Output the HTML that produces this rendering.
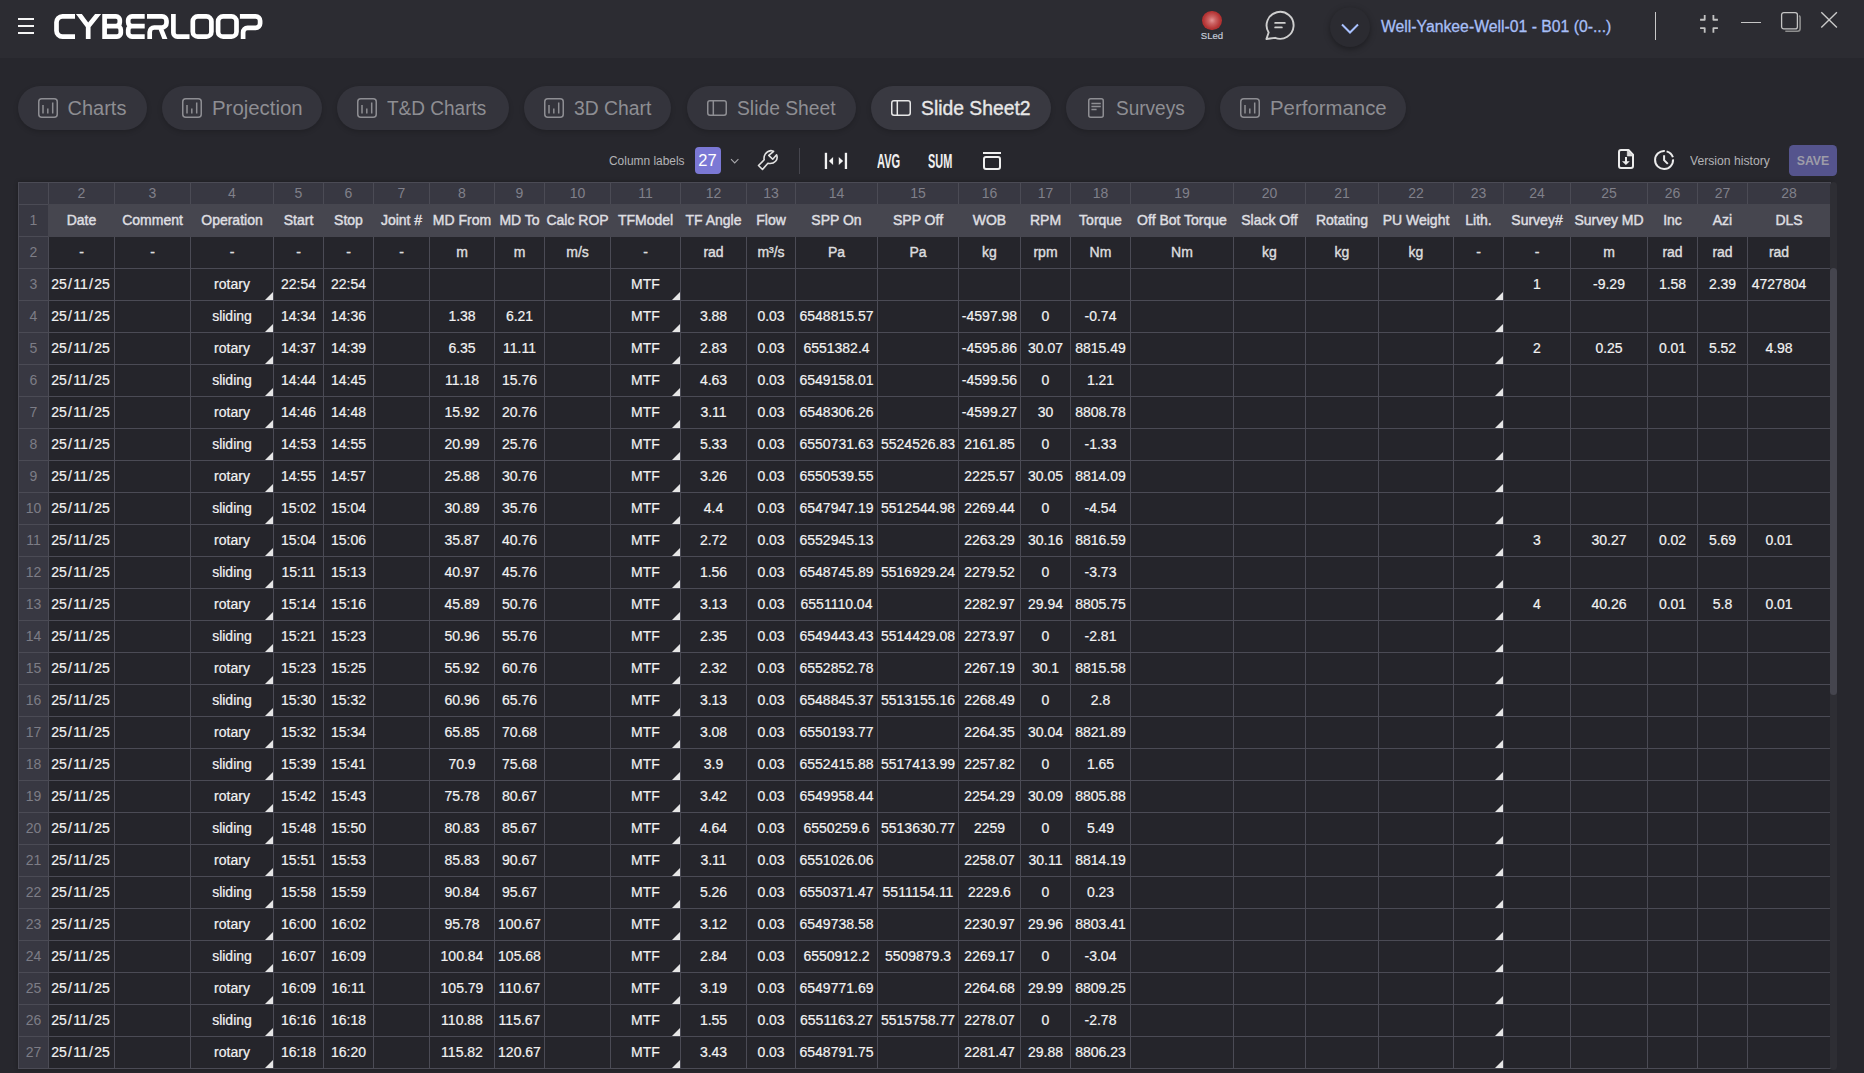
<!DOCTYPE html>
<html><head><meta charset="utf-8">
<style>
:root{--page:#27272d;--bar:#2c2c32;--cell:#25252b;--colnum:#383842;--hdr:#46464f;--grid:#4b4b55;}
*{margin:0;padding:0;box-sizing:border-box}
html,body{width:1864px;height:1073px;overflow:hidden;background:var(--page);font-family:"Liberation Sans",sans-serif;}
.abs{position:absolute}
#top{position:absolute;left:0;top:0;width:1864px;height:58px;background:var(--bar)}
.tab{position:absolute;top:86px;height:44px;border-radius:22px;background:#34343c;box-shadow:0 2px 5px rgba(0,0,0,.18);color:#8e8e93;font-size:20px;line-height:44px;white-space:nowrap}
.tab.act{background:#393941;color:#e8e8e8}
.tab.act span{-webkit-text-stroke:0.35px #e8e8e8}
.tab svg{position:absolute;left:20px;top:12px}
.tab span{position:absolute;left:49.5px;top:0;transform-origin:0 50%}
.lbl{font-size:12.3px;line-height:20px;color:#b3b3b6;white-space:nowrap}
.cond{font-size:19.5px;font-weight:bold;line-height:20px;color:#f0f0f0;transform:scaleX(0.6);transform-origin:0 0;white-space:nowrap}
.tbl{position:absolute;left:18px;top:182px;width:1813px;height:887px;box-shadow:0 0 4px rgba(0,0,0,.3)}
.tbl em{font-style:normal;margin:0 1.3px}
.sb{position:absolute;left:1830px;width:7px}
.tbl i.v{position:absolute;top:0;width:1px;height:887px;background:var(--grid)}
.tbl i.h{position:absolute;left:0;height:1px;width:1813px;background:var(--grid)}
.tbl div.cn{position:absolute;top:0px;height:21px;line-height:22px;text-align:center;color:#80808a;font-size:14px}
.tbl div.rn{position:absolute;left:1px;width:29px;text-align:center;color:#7d7d86;font-size:14px}
.tbl div.hd,.tbl div.un,.tbl div.dt{position:absolute;text-align:center;white-space:nowrap;font-size:14px}
.tbl div.hd{color:#dedee0;-webkit-text-stroke:0.45px #dedee0}
.tbl div.un{color:#dddddf;-webkit-text-stroke:0.4px #dddddf}
.tbl div.dt{color:#f2f2f2;-webkit-text-stroke:0.2px #f2f2f2}
.tbl b.tri{position:absolute;width:8px;height:8px;background:#e6e6e6;clip-path:polygon(100% 0,100% 100%,0 100%)}
</style></head>
<body>
<div id="top"></div>
<!-- hamburger -->
<div class="abs" style="left:18px;top:18px;width:16px;height:2px;background:#f4f4f4"></div>
<div class="abs" style="left:18px;top:25px;width:16px;height:2px;background:#f4f4f4"></div>
<div class="abs" style="left:18px;top:32px;width:16px;height:2px;background:#f4f4f4"></div>
<!-- logo -->
<svg class="abs" style="left:0;top:0" width="280" height="58" viewBox="0 0 280 58">
<defs><clipPath id="lc"><rect x="0" y="14" width="280" height="25"/></clipPath></defs>
<g clip-path="url(#lc)" fill="none" stroke="#ffffff" stroke-width="4.7" stroke-linejoin="round">
<path d="M75 16.35 H62.5 A6 6 0 0 0 56.5 22.5 V30.5 A6 6 0 0 0 62.5 36.65 H75"/>
<path d="M77.4 12 L88.2 26.3 L99.7 12 M88.2 25 V40"/>
<path d="M104.6 12 V40 M104.6 16.35 H116 A3.8 3.8 0 0 1 119.8 20.3 V22.3 A3.8 3.8 0 0 1 116 26.1 H104.6 H117 A3.8 3.8 0 0 1 120.8 29.9 V32.7 A3.8 3.8 0 0 1 117 36.65 H104.6"/>
<path d="M144.7 16.35 H132 A3.8 3.8 0 0 0 128.2 20.3 V22.3 A3.8 3.8 0 0 0 132 26.1 H144.7 M132 26.1 A3.8 3.8 0 0 0 128.2 29.9 V32.7 A3.8 3.8 0 0 0 132 36.65 H144.7"/>
<path d="M147 16.35 H162 A4.5 4.5 0 0 1 166.5 21 V23 A4.5 4.5 0 0 1 162 27.5 H154.2 A4.5 4.5 0 0 0 149.7 32 V40 M160.5 28 L165.3 40"/>
<path d="M173.4 12 V32.5 A4 4 0 0 0 177.4 36.65 H189.5"/>
<rect x="192.8" y="16.35" width="18.6" height="20.3" rx="5"/>
<rect x="218.1" y="16.35" width="18.4" height="20.3" rx="5"/>
<path d="M239.9 16.35 H255.6 A4.5 4.5 0 0 1 260.1 21 V23.4 A4.5 4.5 0 0 1 255.6 27.9 H247.6 A4.5 4.5 0 0 0 243.1 32.4 V40"/>
</g></svg>
<!-- right header -->
<div class="abs" style="left:1202px;top:10.6px;width:19.8px;height:19.6px;border-radius:50%;background:radial-gradient(circle at 50% 49%,#e39393 0%,#cc6464 25%,#b53535 60%,#a81c1c 100%)"></div>
<div class="abs" style="left:1199px;top:29.5px;width:26px;text-align:center;font-size:9.6px;line-height:12px;color:#c8cedc;-webkit-text-stroke:0.15px #c8cedc">SLed</div>
<svg class="abs" style="left:1260px;top:5px" width="40" height="40" viewBox="0 0 40 40" fill="none" stroke="#cfcfcf" stroke-width="1.9" stroke-linecap="round" stroke-linejoin="round">
<path d="M15.04 32.82 A13.5 13.5 0 1 0 8.65 27.45 L6.4 34 Z"/>
<path d="M15.2 17.9 H24.8 M15.2 22.4 H21.8"/>
</svg>
<div class="abs" style="left:1330px;top:7px;width:40px;height:40px;border-radius:50%;background:#2b2b31;box-shadow:0 2px 6px rgba(0,0,0,.35)"></div>
<svg class="abs" style="left:1340px;top:22px" width="20" height="14" viewBox="0 0 20 14" fill="none" stroke="#a9c2ff" stroke-width="2"><path d="M2 2.5 L10 10.5 L18 2.5"/></svg>
<div class="abs" id="well" style="left:1380.5px;top:18px;transform:scaleX(0.985);font-size:16px;line-height:18px;color:#a7bff7;white-space:nowrap;-webkit-text-stroke:0.3px #a7bff7;transform-origin:0 50%">Well-Yankee-Well-01 - B01 (0-...)</div>
<div class="abs" style="left:1654.5px;top:12px;width:1px;height:27.5px;background:#c8c8c8"></div>
<svg class="abs" style="left:1692px;top:8px" width="34" height="30" viewBox="0 0 34 30" fill="none" stroke="#c2c2c2" stroke-width="1.8" stroke-linejoin="round"><path d="M12.7 7 V11.74 H8.1 M21.4 7 V11.74 H25.9 M8.1 20.1 H12.7 V24.7 M25.9 20.1 H21.4 V24.7"/></svg>
<div class="abs" style="left:1741px;top:22px;width:20px;height:1.2px;background:#c6c6c6"></div>
<svg class="abs" style="left:1778px;top:9px" width="28" height="28" viewBox="0 0 28 28" fill="none" stroke="#c4c4c4" stroke-width="1.3">
<path d="M7.3 22.2 H19.4 Q22.1 22.2 22.1 19.5 V8.6 Q22.1 7.2 21.1 6.6" stroke="#8e8e8e" stroke-width="1.6"/>
<rect x="3.6" y="3.6" width="15.8" height="16.3" rx="2.2"/>
</svg>
<svg class="abs" style="left:1818px;top:9px" width="22" height="22" viewBox="0 0 22 22" fill="none" stroke="#c9c9c9" stroke-width="1.4"><path d="M3.3 3.3 L18.9 18.6 M18.9 3.3 L3.3 18.6"/></svg>

<div class="tab" style="left:18px;width:128.5px"><svg style="left:20px;top:12px" width="20" height="20" viewBox="0 0 20 20" fill="none" stroke="currentColor" stroke-width="1.5"><rect x="0.75" y="0.75" width="18.5" height="18.5" rx="3"/><path d="M5 7 V15.5 M9.8 10.4 V15.5 M14.7 4.4 V15.5"/></svg><span style="transform:scaleX(1.0)">Charts</span></div>
<div class="tab" style="left:162px;width:160px"><svg style="left:20px;top:12px" width="20" height="20" viewBox="0 0 20 20" fill="none" stroke="currentColor" stroke-width="1.5"><rect x="0.75" y="0.75" width="18.5" height="18.5" rx="3"/><path d="M5 7 V15.5 M9.8 10.4 V15.5 M14.7 4.4 V15.5"/></svg><span style="transform:scaleX(1.02)">Projection</span></div>
<div class="tab" style="left:337px;width:171.7px"><svg style="left:20px;top:12px" width="20" height="20" viewBox="0 0 20 20" fill="none" stroke="currentColor" stroke-width="1.5"><rect x="0.75" y="0.75" width="18.5" height="18.5" rx="3"/><path d="M5 7 V15.5 M9.8 10.4 V15.5 M14.7 4.4 V15.5"/></svg><span style="transform:scaleX(0.95)">T&amp;D Charts</span></div>
<div class="tab" style="left:524px;width:147.4px"><svg style="left:20px;top:12px" width="20" height="20" viewBox="0 0 20 20" fill="none" stroke="currentColor" stroke-width="1.5"><rect x="0.75" y="0.75" width="18.5" height="18.5" rx="3"/><path d="M5 7 V15.5 M9.8 10.4 V15.5 M14.7 4.4 V15.5"/></svg><span style="transform:scaleX(0.966)">3D Chart</span></div>
<div class="tab" style="left:687px;width:168.8px"><svg style="left:19.8px;top:14px" width="20" height="16" viewBox="0 0 20 16" fill="none" stroke="currentColor" stroke-width="1.5"><rect x="0.75" y="0.75" width="18.5" height="14.5" rx="2.2"/><path d="M6.3 1 V15"/></svg><span style="transform:scaleX(0.964)">Slide Sheet</span></div>
<div class="tab act" style="left:871px;width:179.6px"><svg style="left:19.8px;top:14px" width="20" height="16" viewBox="0 0 20 16" fill="none" stroke="currentColor" stroke-width="1.5"><rect x="0.75" y="0.75" width="18.5" height="14.5" rx="2.2"/><path d="M6.3 1 V15"/></svg><span style="transform:scaleX(0.966)">Slide Sheet2</span></div>
<div class="tab" style="left:1066px;width:139px"><svg style="left:21.8px;top:12px" width="16" height="20" viewBox="0 0 16 20" fill="none" stroke="currentColor" stroke-width="1.5"><rect x="0.75" y="0.75" width="14.5" height="18.5" rx="2"/><path d="M3.4 5.6 H12.8 M3.4 8.6 H12.8 M3.4 11.6 H8.6"/></svg><span style="transform:scaleX(0.951)">Surveys</span></div>
<div class="tab" style="left:1220px;width:186px"><svg style="left:20px;top:12px" width="20" height="20" viewBox="0 0 20 20" fill="none" stroke="currentColor" stroke-width="1.5"><rect x="0.75" y="0.75" width="18.5" height="18.5" rx="3"/><path d="M5 7 V15.5 M9.8 10.4 V15.5 M14.7 4.4 V15.5"/></svg><span style="transform:scaleX(1.019)">Performance</span></div>

<div class="abs lbl" style="left:608.5px;top:151px;transform:scaleX(0.97);transform-origin:0 0">Column labels</div>
<div class="abs" style="left:695px;top:147px;width:26px;height:27px;border-radius:4px;background:#7b78d5"></div>
<div class="abs" style="left:697px;top:150px;width:21px;text-align:center;font-size:16.5px;line-height:21px;color:#fff">27</div>
<svg class="abs" style="left:728px;top:156px" width="12" height="10" viewBox="0 0 12 10" fill="none" stroke="#a8a8ac" stroke-width="1.1"><path d="M3 3.2 L6.7 6.9 L10.4 3.2"/></svg>
<svg class="abs" style="left:750px;top:144px" width="40" height="32" viewBox="0 0 40 32" fill="none" stroke="#e2e2e2" stroke-width="1.6" stroke-linejoin="round"><path d="M8.5 21.5 L14.2 15.8 C13.4 12.5 15.5 7.2 20.9 6.6 L23.6 7.3 L18.8 11.4 L22.7 15.2 L26.6 10.8 C28.5 15.5 24.8 20.5 17.9 19.3 L12.5 25.5 Z"/></svg>
<div class="abs" style="left:799px;top:148px;width:1px;height:26px;background:#46464e"></div>
<svg class="abs" style="left:818px;top:146px" width="40" height="30" viewBox="0 0 40 30" fill="#f2f2f2"><rect x="6.8" y="6.8" width="2.3" height="16.2"/><rect x="26.8" y="6.8" width="2.3" height="16.2"/><path d="M10.9 15.1 L15.1 10.9 V19 Z M25.1 15.1 L20.8 10.9 V19 Z"/></svg>
<div class="abs cond" style="left:876.5px;top:151px;transform:scaleX(0.57)">AVG</div>
<div class="abs cond" style="left:927.5px;top:151px;transform:scaleX(0.56)">SUM</div>
<svg class="abs" style="left:980px;top:148px" width="24" height="26" viewBox="0 0 24 26" fill="none" stroke="#f0f0f0" stroke-width="2"><path d="M3 5 H21"/><rect x="4" y="9" width="16" height="12" rx="2"/></svg>
<svg class="abs" style="left:1612px;top:144px" width="28" height="30" viewBox="0 0 28 30" fill="none" stroke="#ececec" stroke-width="2" stroke-linejoin="round"><path d="M9 5.9 H16.5 L21 10.6 V22 Q21 24 19 24 H9 Q7 24 7 22 V7.9 Q7 5.9 9 5.9 Z"/><path d="M15.3 6 V12 H21 Z" fill="#dcdcdc" stroke-width="0.6"/><path d="M14 13 V19.5" stroke-width="2"/><path d="M10 17.3 H17.8 L13.9 21 Z" fill="#ececec" stroke="none"/></svg>
<svg class="abs" style="left:1650px;top:146px" width="28" height="28" viewBox="0 0 28 28" fill="none" stroke="#ececec" stroke-width="2"><path d="M14.8 5.1 A9 9 0 1 0 23.05 13.4"/><path d="M16.6 5.35 A9 9 0 0 1 22.9 11.3"/><path d="M14.1 9.3 V14.1 L17.8 17.9"/></svg>
<div class="abs lbl" style="left:1690px;top:151px;transform:scaleX(0.99);transform-origin:0 0">Version history</div>
<div class="abs" style="left:1789px;top:145px;width:48px;height:31px;border-radius:4.5px;background:#55548d"></div>
<div class="abs" style="left:1789px;top:146px;width:48px;height:31px;text-align:center;line-height:31px;font-size:12.3px;font-weight:bold;color:#9d9ca8">SAVE</div>

<div class="tbl">
<div style="position:absolute;left:0;top:0;width:1813px;height:887px;background:var(--cell)"></div>
<div style="position:absolute;left:0;top:0;width:1813px;height:22px;background:var(--colnum)"></div>
<div style="position:absolute;left:0;top:22px;width:30px;height:865px;background:var(--colnum)"></div>
<i class="v" style="left:0px"></i>
<i class="v" style="left:30px"></i>
<i class="v" style="left:96px"></i>
<i class="v" style="left:172px"></i>
<i class="v" style="left:255px"></i>
<i class="v" style="left:305px"></i>
<i class="v" style="left:355px"></i>
<i class="v" style="left:411px"></i>
<i class="v" style="left:476px"></i>
<i class="v" style="left:526px"></i>
<i class="v" style="left:592px"></i>
<i class="v" style="left:662px"></i>
<i class="v" style="left:728px"></i>
<i class="v" style="left:777px"></i>
<i class="v" style="left:859px"></i>
<i class="v" style="left:940px"></i>
<i class="v" style="left:1002px"></i>
<i class="v" style="left:1052px"></i>
<i class="v" style="left:1112px"></i>
<i class="v" style="left:1215px"></i>
<i class="v" style="left:1287px"></i>
<i class="v" style="left:1360px"></i>
<i class="v" style="left:1435px"></i>
<i class="v" style="left:1485px"></i>
<i class="v" style="left:1552px"></i>
<i class="v" style="left:1629px"></i>
<i class="v" style="left:1679px"></i>
<i class="v" style="left:1729px"></i>
<i class="v" style="left:1812px"></i>
<i class="h" style="top:0px"></i>
<i class="h" style="top:22px"></i>
<i class="h" style="top:54px"></i>
<i class="h" style="top:86px"></i>
<i class="h" style="top:118px"></i>
<i class="h" style="top:150px"></i>
<i class="h" style="top:182px"></i>
<i class="h" style="top:214px"></i>
<i class="h" style="top:246px"></i>
<i class="h" style="top:278px"></i>
<i class="h" style="top:310px"></i>
<i class="h" style="top:342px"></i>
<i class="h" style="top:374px"></i>
<i class="h" style="top:406px"></i>
<i class="h" style="top:438px"></i>
<i class="h" style="top:470px"></i>
<i class="h" style="top:502px"></i>
<i class="h" style="top:534px"></i>
<i class="h" style="top:566px"></i>
<i class="h" style="top:598px"></i>
<i class="h" style="top:630px"></i>
<i class="h" style="top:662px"></i>
<i class="h" style="top:694px"></i>
<i class="h" style="top:726px"></i>
<i class="h" style="top:758px"></i>
<i class="h" style="top:790px"></i>
<i class="h" style="top:822px"></i>
<i class="h" style="top:854px"></i>
<i class="h" style="top:886px"></i>
<div style="position:absolute;left:30px;top:22px;width:1783px;height:33px;background:var(--hdr)"></div>
<div class="cn" style="left:31px;width:65px">2</div>
<div class="cn" style="left:97px;width:75px">3</div>
<div class="cn" style="left:173px;width:82px">4</div>
<div class="cn" style="left:256px;width:49px">5</div>
<div class="cn" style="left:306px;width:49px">6</div>
<div class="cn" style="left:356px;width:55px">7</div>
<div class="cn" style="left:412px;width:64px">8</div>
<div class="cn" style="left:477px;width:49px">9</div>
<div class="cn" style="left:527px;width:65px">10</div>
<div class="cn" style="left:593px;width:69px">11</div>
<div class="cn" style="left:663px;width:65px">12</div>
<div class="cn" style="left:729px;width:48px">13</div>
<div class="cn" style="left:778px;width:81px">14</div>
<div class="cn" style="left:860px;width:80px">15</div>
<div class="cn" style="left:941px;width:61px">16</div>
<div class="cn" style="left:1003px;width:49px">17</div>
<div class="cn" style="left:1053px;width:59px">18</div>
<div class="cn" style="left:1113px;width:102px">19</div>
<div class="cn" style="left:1216px;width:71px">20</div>
<div class="cn" style="left:1288px;width:72px">21</div>
<div class="cn" style="left:1361px;width:74px">22</div>
<div class="cn" style="left:1436px;width:49px">23</div>
<div class="cn" style="left:1486px;width:66px">24</div>
<div class="cn" style="left:1553px;width:76px">25</div>
<div class="cn" style="left:1630px;width:49px">26</div>
<div class="cn" style="left:1680px;width:49px">27</div>
<div class="cn" style="left:1730px;width:82px">28</div>
<div class="rn" style="top:23px;height:31px;line-height:31px">1</div>
<div class="rn" style="top:55px;height:31px;line-height:31px">2</div>
<div class="rn" style="top:87px;height:31px;line-height:31px">3</div>
<div class="rn" style="top:119px;height:31px;line-height:31px">4</div>
<div class="rn" style="top:151px;height:31px;line-height:31px">5</div>
<div class="rn" style="top:183px;height:31px;line-height:31px">6</div>
<div class="rn" style="top:215px;height:31px;line-height:31px">7</div>
<div class="rn" style="top:247px;height:31px;line-height:31px">8</div>
<div class="rn" style="top:279px;height:31px;line-height:31px">9</div>
<div class="rn" style="top:311px;height:31px;line-height:31px">10</div>
<div class="rn" style="top:343px;height:31px;line-height:31px">11</div>
<div class="rn" style="top:375px;height:31px;line-height:31px">12</div>
<div class="rn" style="top:407px;height:31px;line-height:31px">13</div>
<div class="rn" style="top:439px;height:31px;line-height:31px">14</div>
<div class="rn" style="top:471px;height:31px;line-height:31px">15</div>
<div class="rn" style="top:503px;height:31px;line-height:31px">16</div>
<div class="rn" style="top:535px;height:31px;line-height:31px">17</div>
<div class="rn" style="top:567px;height:31px;line-height:31px">18</div>
<div class="rn" style="top:599px;height:31px;line-height:31px">19</div>
<div class="rn" style="top:631px;height:31px;line-height:31px">20</div>
<div class="rn" style="top:663px;height:31px;line-height:31px">21</div>
<div class="rn" style="top:695px;height:31px;line-height:31px">22</div>
<div class="rn" style="top:727px;height:31px;line-height:31px">23</div>
<div class="rn" style="top:759px;height:31px;line-height:31px">24</div>
<div class="rn" style="top:791px;height:31px;line-height:31px">25</div>
<div class="rn" style="top:823px;height:31px;line-height:31px">26</div>
<div class="rn" style="top:855px;height:31px;line-height:31px">27</div>
<div class="hd" style="left:31px;top:23px;width:65px;height:31px;line-height:31px">Date</div>
<div class="hd" style="left:97px;top:23px;width:75px;height:31px;line-height:31px">Comment</div>
<div class="hd" style="left:173px;top:23px;width:82px;height:31px;line-height:31px">Operation</div>
<div class="hd" style="left:256px;top:23px;width:49px;height:31px;line-height:31px">Start</div>
<div class="hd" style="left:306px;top:23px;width:49px;height:31px;line-height:31px">Stop</div>
<div class="hd" style="left:356px;top:23px;width:55px;height:31px;line-height:31px">Joint #</div>
<div class="hd" style="left:412px;top:23px;width:64px;height:31px;line-height:31px">MD From</div>
<div class="hd" style="left:477px;top:23px;width:49px;height:31px;line-height:31px">MD To</div>
<div class="hd" style="left:527px;top:23px;width:65px;height:31px;line-height:31px">Calc ROP</div>
<div class="hd" style="left:593px;top:23px;width:69px;height:31px;line-height:31px">TFModel</div>
<div class="hd" style="left:663px;top:23px;width:65px;height:31px;line-height:31px">TF Angle</div>
<div class="hd" style="left:729px;top:23px;width:48px;height:31px;line-height:31px">Flow</div>
<div class="hd" style="left:778px;top:23px;width:81px;height:31px;line-height:31px">SPP On</div>
<div class="hd" style="left:860px;top:23px;width:80px;height:31px;line-height:31px">SPP Off</div>
<div class="hd" style="left:941px;top:23px;width:61px;height:31px;line-height:31px">WOB</div>
<div class="hd" style="left:1003px;top:23px;width:49px;height:31px;line-height:31px">RPM</div>
<div class="hd" style="left:1053px;top:23px;width:59px;height:31px;line-height:31px">Torque</div>
<div class="hd" style="left:1113px;top:23px;width:102px;height:31px;line-height:31px">Off Bot Torque</div>
<div class="hd" style="left:1216px;top:23px;width:71px;height:31px;line-height:31px">Slack Off</div>
<div class="hd" style="left:1288px;top:23px;width:72px;height:31px;line-height:31px">Rotating</div>
<div class="hd" style="left:1361px;top:23px;width:74px;height:31px;line-height:31px">PU Weight</div>
<div class="hd" style="left:1436px;top:23px;width:49px;height:31px;line-height:31px">Lith.</div>
<div class="hd" style="left:1486px;top:23px;width:66px;height:31px;line-height:31px">Survey#</div>
<div class="hd" style="left:1553px;top:23px;width:76px;height:31px;line-height:31px">Survey MD</div>
<div class="hd" style="left:1630px;top:23px;width:49px;height:31px;line-height:31px">Inc</div>
<div class="hd" style="left:1680px;top:23px;width:49px;height:31px;line-height:31px">Azi</div>
<div class="hd" style="left:1730px;top:23px;width:82px;height:31px;line-height:31px">DLS</div>
<div class="un" style="left:31px;top:55px;width:65px;height:31px;line-height:31px">-</div>
<div class="un" style="left:97px;top:55px;width:75px;height:31px;line-height:31px">-</div>
<div class="un" style="left:173px;top:55px;width:82px;height:31px;line-height:31px">-</div>
<div class="un" style="left:256px;top:55px;width:49px;height:31px;line-height:31px">-</div>
<div class="un" style="left:306px;top:55px;width:49px;height:31px;line-height:31px">-</div>
<div class="un" style="left:356px;top:55px;width:55px;height:31px;line-height:31px">-</div>
<div class="un" style="left:412px;top:55px;width:64px;height:31px;line-height:31px">m</div>
<div class="un" style="left:477px;top:55px;width:49px;height:31px;line-height:31px">m</div>
<div class="un" style="left:527px;top:55px;width:65px;height:31px;line-height:31px">m/s</div>
<div class="un" style="left:593px;top:55px;width:69px;height:31px;line-height:31px">-</div>
<div class="un" style="left:663px;top:55px;width:65px;height:31px;line-height:31px">rad</div>
<div class="un" style="left:729px;top:55px;width:48px;height:31px;line-height:31px">m³/s</div>
<div class="un" style="left:778px;top:55px;width:81px;height:31px;line-height:31px">Pa</div>
<div class="un" style="left:860px;top:55px;width:80px;height:31px;line-height:31px">Pa</div>
<div class="un" style="left:941px;top:55px;width:61px;height:31px;line-height:31px">kg</div>
<div class="un" style="left:1003px;top:55px;width:49px;height:31px;line-height:31px">rpm</div>
<div class="un" style="left:1053px;top:55px;width:59px;height:31px;line-height:31px">Nm</div>
<div class="un" style="left:1113px;top:55px;width:102px;height:31px;line-height:31px">Nm</div>
<div class="un" style="left:1216px;top:55px;width:71px;height:31px;line-height:31px">kg</div>
<div class="un" style="left:1288px;top:55px;width:72px;height:31px;line-height:31px">kg</div>
<div class="un" style="left:1361px;top:55px;width:74px;height:31px;line-height:31px">kg</div>
<div class="un" style="left:1436px;top:55px;width:49px;height:31px;line-height:31px">-</div>
<div class="un" style="left:1486px;top:55px;width:66px;height:31px;line-height:31px">-</div>
<div class="un" style="left:1553px;top:55px;width:76px;height:31px;line-height:31px">m</div>
<div class="un" style="left:1630px;top:55px;width:49px;height:31px;line-height:31px">rad</div>
<div class="un" style="left:1680px;top:55px;width:49px;height:31px;line-height:31px">rad</div>
<div class="un" style="left:1730px;top:55px;width:62px;height:31px;line-height:31px">rad</div>
<div class="dt" style="left:30px;top:87px;width:65px;height:31px;line-height:31px">25<em>/</em>11<em>/</em>25</div>
<div class="dt" style="left:173px;top:87px;width:82px;height:31px;line-height:31px">rotary</div>
<div class="dt" style="left:256px;top:87px;width:49px;height:31px;line-height:31px">22:54</div>
<div class="dt" style="left:306px;top:87px;width:49px;height:31px;line-height:31px">22:54</div>
<div class="dt" style="left:593px;top:87px;width:69px;height:31px;line-height:31px">MTF</div>
<div class="dt" style="left:1486px;top:87px;width:66px;height:31px;line-height:31px">1</div>
<div class="dt" style="left:1553px;top:87px;width:76px;height:31px;line-height:31px">-9.29</div>
<div class="dt" style="left:1630px;top:87px;width:49px;height:31px;line-height:31px">1.58</div>
<div class="dt" style="left:1680px;top:87px;width:49px;height:31px;line-height:31px">2.39</div>
<div class="dt" style="left:1730px;top:87px;width:62px;height:31px;line-height:31px">4727804</div>
<b class="tri" style="left:247px;top:110px"></b>
<b class="tri" style="left:654px;top:110px"></b>
<b class="tri" style="left:1477px;top:110px"></b>
<div class="dt" style="left:30px;top:119px;width:65px;height:31px;line-height:31px">25<em>/</em>11<em>/</em>25</div>
<div class="dt" style="left:173px;top:119px;width:82px;height:31px;line-height:31px">sliding</div>
<div class="dt" style="left:256px;top:119px;width:49px;height:31px;line-height:31px">14:34</div>
<div class="dt" style="left:306px;top:119px;width:49px;height:31px;line-height:31px">14:36</div>
<div class="dt" style="left:412px;top:119px;width:64px;height:31px;line-height:31px">1.38</div>
<div class="dt" style="left:477px;top:119px;width:49px;height:31px;line-height:31px">6.21</div>
<div class="dt" style="left:593px;top:119px;width:69px;height:31px;line-height:31px">MTF</div>
<div class="dt" style="left:663px;top:119px;width:65px;height:31px;line-height:31px">3.88</div>
<div class="dt" style="left:729px;top:119px;width:48px;height:31px;line-height:31px">0.03</div>
<div class="dt" style="left:778px;top:119px;width:81px;height:31px;line-height:31px">6548815.57</div>
<div class="dt" style="left:941px;top:119px;width:61px;height:31px;line-height:31px">-4597.98</div>
<div class="dt" style="left:1003px;top:119px;width:49px;height:31px;line-height:31px">0</div>
<div class="dt" style="left:1053px;top:119px;width:59px;height:31px;line-height:31px">-0.74</div>
<b class="tri" style="left:247px;top:142px"></b>
<b class="tri" style="left:654px;top:142px"></b>
<b class="tri" style="left:1477px;top:142px"></b>
<div class="dt" style="left:30px;top:151px;width:65px;height:31px;line-height:31px">25<em>/</em>11<em>/</em>25</div>
<div class="dt" style="left:173px;top:151px;width:82px;height:31px;line-height:31px">rotary</div>
<div class="dt" style="left:256px;top:151px;width:49px;height:31px;line-height:31px">14:37</div>
<div class="dt" style="left:306px;top:151px;width:49px;height:31px;line-height:31px">14:39</div>
<div class="dt" style="left:412px;top:151px;width:64px;height:31px;line-height:31px">6.35</div>
<div class="dt" style="left:477px;top:151px;width:49px;height:31px;line-height:31px">11.11</div>
<div class="dt" style="left:593px;top:151px;width:69px;height:31px;line-height:31px">MTF</div>
<div class="dt" style="left:663px;top:151px;width:65px;height:31px;line-height:31px">2.83</div>
<div class="dt" style="left:729px;top:151px;width:48px;height:31px;line-height:31px">0.03</div>
<div class="dt" style="left:778px;top:151px;width:81px;height:31px;line-height:31px">6551382.4</div>
<div class="dt" style="left:941px;top:151px;width:61px;height:31px;line-height:31px">-4595.86</div>
<div class="dt" style="left:1003px;top:151px;width:49px;height:31px;line-height:31px">30.07</div>
<div class="dt" style="left:1053px;top:151px;width:59px;height:31px;line-height:31px">8815.49</div>
<div class="dt" style="left:1486px;top:151px;width:66px;height:31px;line-height:31px">2</div>
<div class="dt" style="left:1553px;top:151px;width:76px;height:31px;line-height:31px">0.25</div>
<div class="dt" style="left:1630px;top:151px;width:49px;height:31px;line-height:31px">0.01</div>
<div class="dt" style="left:1680px;top:151px;width:49px;height:31px;line-height:31px">5.52</div>
<div class="dt" style="left:1730px;top:151px;width:62px;height:31px;line-height:31px">4.98</div>
<b class="tri" style="left:247px;top:174px"></b>
<b class="tri" style="left:654px;top:174px"></b>
<b class="tri" style="left:1477px;top:174px"></b>
<div class="dt" style="left:30px;top:183px;width:65px;height:31px;line-height:31px">25<em>/</em>11<em>/</em>25</div>
<div class="dt" style="left:173px;top:183px;width:82px;height:31px;line-height:31px">sliding</div>
<div class="dt" style="left:256px;top:183px;width:49px;height:31px;line-height:31px">14:44</div>
<div class="dt" style="left:306px;top:183px;width:49px;height:31px;line-height:31px">14:45</div>
<div class="dt" style="left:412px;top:183px;width:64px;height:31px;line-height:31px">11.18</div>
<div class="dt" style="left:477px;top:183px;width:49px;height:31px;line-height:31px">15.76</div>
<div class="dt" style="left:593px;top:183px;width:69px;height:31px;line-height:31px">MTF</div>
<div class="dt" style="left:663px;top:183px;width:65px;height:31px;line-height:31px">4.63</div>
<div class="dt" style="left:729px;top:183px;width:48px;height:31px;line-height:31px">0.03</div>
<div class="dt" style="left:778px;top:183px;width:81px;height:31px;line-height:31px">6549158.01</div>
<div class="dt" style="left:941px;top:183px;width:61px;height:31px;line-height:31px">-4599.56</div>
<div class="dt" style="left:1003px;top:183px;width:49px;height:31px;line-height:31px">0</div>
<div class="dt" style="left:1053px;top:183px;width:59px;height:31px;line-height:31px">1.21</div>
<b class="tri" style="left:247px;top:206px"></b>
<b class="tri" style="left:654px;top:206px"></b>
<b class="tri" style="left:1477px;top:206px"></b>
<div class="dt" style="left:30px;top:215px;width:65px;height:31px;line-height:31px">25<em>/</em>11<em>/</em>25</div>
<div class="dt" style="left:173px;top:215px;width:82px;height:31px;line-height:31px">rotary</div>
<div class="dt" style="left:256px;top:215px;width:49px;height:31px;line-height:31px">14:46</div>
<div class="dt" style="left:306px;top:215px;width:49px;height:31px;line-height:31px">14:48</div>
<div class="dt" style="left:412px;top:215px;width:64px;height:31px;line-height:31px">15.92</div>
<div class="dt" style="left:477px;top:215px;width:49px;height:31px;line-height:31px">20.76</div>
<div class="dt" style="left:593px;top:215px;width:69px;height:31px;line-height:31px">MTF</div>
<div class="dt" style="left:663px;top:215px;width:65px;height:31px;line-height:31px">3.11</div>
<div class="dt" style="left:729px;top:215px;width:48px;height:31px;line-height:31px">0.03</div>
<div class="dt" style="left:778px;top:215px;width:81px;height:31px;line-height:31px">6548306.26</div>
<div class="dt" style="left:941px;top:215px;width:61px;height:31px;line-height:31px">-4599.27</div>
<div class="dt" style="left:1003px;top:215px;width:49px;height:31px;line-height:31px">30</div>
<div class="dt" style="left:1053px;top:215px;width:59px;height:31px;line-height:31px">8808.78</div>
<b class="tri" style="left:247px;top:238px"></b>
<b class="tri" style="left:654px;top:238px"></b>
<b class="tri" style="left:1477px;top:238px"></b>
<div class="dt" style="left:30px;top:247px;width:65px;height:31px;line-height:31px">25<em>/</em>11<em>/</em>25</div>
<div class="dt" style="left:173px;top:247px;width:82px;height:31px;line-height:31px">sliding</div>
<div class="dt" style="left:256px;top:247px;width:49px;height:31px;line-height:31px">14:53</div>
<div class="dt" style="left:306px;top:247px;width:49px;height:31px;line-height:31px">14:55</div>
<div class="dt" style="left:412px;top:247px;width:64px;height:31px;line-height:31px">20.99</div>
<div class="dt" style="left:477px;top:247px;width:49px;height:31px;line-height:31px">25.76</div>
<div class="dt" style="left:593px;top:247px;width:69px;height:31px;line-height:31px">MTF</div>
<div class="dt" style="left:663px;top:247px;width:65px;height:31px;line-height:31px">5.33</div>
<div class="dt" style="left:729px;top:247px;width:48px;height:31px;line-height:31px">0.03</div>
<div class="dt" style="left:778px;top:247px;width:81px;height:31px;line-height:31px">6550731.63</div>
<div class="dt" style="left:860px;top:247px;width:80px;height:31px;line-height:31px">5524526.83</div>
<div class="dt" style="left:941px;top:247px;width:61px;height:31px;line-height:31px">2161.85</div>
<div class="dt" style="left:1003px;top:247px;width:49px;height:31px;line-height:31px">0</div>
<div class="dt" style="left:1053px;top:247px;width:59px;height:31px;line-height:31px">-1.33</div>
<b class="tri" style="left:247px;top:270px"></b>
<b class="tri" style="left:654px;top:270px"></b>
<b class="tri" style="left:1477px;top:270px"></b>
<div class="dt" style="left:30px;top:279px;width:65px;height:31px;line-height:31px">25<em>/</em>11<em>/</em>25</div>
<div class="dt" style="left:173px;top:279px;width:82px;height:31px;line-height:31px">rotary</div>
<div class="dt" style="left:256px;top:279px;width:49px;height:31px;line-height:31px">14:55</div>
<div class="dt" style="left:306px;top:279px;width:49px;height:31px;line-height:31px">14:57</div>
<div class="dt" style="left:412px;top:279px;width:64px;height:31px;line-height:31px">25.88</div>
<div class="dt" style="left:477px;top:279px;width:49px;height:31px;line-height:31px">30.76</div>
<div class="dt" style="left:593px;top:279px;width:69px;height:31px;line-height:31px">MTF</div>
<div class="dt" style="left:663px;top:279px;width:65px;height:31px;line-height:31px">3.26</div>
<div class="dt" style="left:729px;top:279px;width:48px;height:31px;line-height:31px">0.03</div>
<div class="dt" style="left:778px;top:279px;width:81px;height:31px;line-height:31px">6550539.55</div>
<div class="dt" style="left:941px;top:279px;width:61px;height:31px;line-height:31px">2225.57</div>
<div class="dt" style="left:1003px;top:279px;width:49px;height:31px;line-height:31px">30.05</div>
<div class="dt" style="left:1053px;top:279px;width:59px;height:31px;line-height:31px">8814.09</div>
<b class="tri" style="left:247px;top:302px"></b>
<b class="tri" style="left:654px;top:302px"></b>
<b class="tri" style="left:1477px;top:302px"></b>
<div class="dt" style="left:30px;top:311px;width:65px;height:31px;line-height:31px">25<em>/</em>11<em>/</em>25</div>
<div class="dt" style="left:173px;top:311px;width:82px;height:31px;line-height:31px">sliding</div>
<div class="dt" style="left:256px;top:311px;width:49px;height:31px;line-height:31px">15:02</div>
<div class="dt" style="left:306px;top:311px;width:49px;height:31px;line-height:31px">15:04</div>
<div class="dt" style="left:412px;top:311px;width:64px;height:31px;line-height:31px">30.89</div>
<div class="dt" style="left:477px;top:311px;width:49px;height:31px;line-height:31px">35.76</div>
<div class="dt" style="left:593px;top:311px;width:69px;height:31px;line-height:31px">MTF</div>
<div class="dt" style="left:663px;top:311px;width:65px;height:31px;line-height:31px">4.4</div>
<div class="dt" style="left:729px;top:311px;width:48px;height:31px;line-height:31px">0.03</div>
<div class="dt" style="left:778px;top:311px;width:81px;height:31px;line-height:31px">6547947.19</div>
<div class="dt" style="left:860px;top:311px;width:80px;height:31px;line-height:31px">5512544.98</div>
<div class="dt" style="left:941px;top:311px;width:61px;height:31px;line-height:31px">2269.44</div>
<div class="dt" style="left:1003px;top:311px;width:49px;height:31px;line-height:31px">0</div>
<div class="dt" style="left:1053px;top:311px;width:59px;height:31px;line-height:31px">-4.54</div>
<b class="tri" style="left:247px;top:334px"></b>
<b class="tri" style="left:654px;top:334px"></b>
<b class="tri" style="left:1477px;top:334px"></b>
<div class="dt" style="left:30px;top:343px;width:65px;height:31px;line-height:31px">25<em>/</em>11<em>/</em>25</div>
<div class="dt" style="left:173px;top:343px;width:82px;height:31px;line-height:31px">rotary</div>
<div class="dt" style="left:256px;top:343px;width:49px;height:31px;line-height:31px">15:04</div>
<div class="dt" style="left:306px;top:343px;width:49px;height:31px;line-height:31px">15:06</div>
<div class="dt" style="left:412px;top:343px;width:64px;height:31px;line-height:31px">35.87</div>
<div class="dt" style="left:477px;top:343px;width:49px;height:31px;line-height:31px">40.76</div>
<div class="dt" style="left:593px;top:343px;width:69px;height:31px;line-height:31px">MTF</div>
<div class="dt" style="left:663px;top:343px;width:65px;height:31px;line-height:31px">2.72</div>
<div class="dt" style="left:729px;top:343px;width:48px;height:31px;line-height:31px">0.03</div>
<div class="dt" style="left:778px;top:343px;width:81px;height:31px;line-height:31px">6552945.13</div>
<div class="dt" style="left:941px;top:343px;width:61px;height:31px;line-height:31px">2263.29</div>
<div class="dt" style="left:1003px;top:343px;width:49px;height:31px;line-height:31px">30.16</div>
<div class="dt" style="left:1053px;top:343px;width:59px;height:31px;line-height:31px">8816.59</div>
<div class="dt" style="left:1486px;top:343px;width:66px;height:31px;line-height:31px">3</div>
<div class="dt" style="left:1553px;top:343px;width:76px;height:31px;line-height:31px">30.27</div>
<div class="dt" style="left:1630px;top:343px;width:49px;height:31px;line-height:31px">0.02</div>
<div class="dt" style="left:1680px;top:343px;width:49px;height:31px;line-height:31px">5.69</div>
<div class="dt" style="left:1730px;top:343px;width:62px;height:31px;line-height:31px">0.01</div>
<b class="tri" style="left:247px;top:366px"></b>
<b class="tri" style="left:654px;top:366px"></b>
<b class="tri" style="left:1477px;top:366px"></b>
<div class="dt" style="left:30px;top:375px;width:65px;height:31px;line-height:31px">25<em>/</em>11<em>/</em>25</div>
<div class="dt" style="left:173px;top:375px;width:82px;height:31px;line-height:31px">sliding</div>
<div class="dt" style="left:256px;top:375px;width:49px;height:31px;line-height:31px">15:11</div>
<div class="dt" style="left:306px;top:375px;width:49px;height:31px;line-height:31px">15:13</div>
<div class="dt" style="left:412px;top:375px;width:64px;height:31px;line-height:31px">40.97</div>
<div class="dt" style="left:477px;top:375px;width:49px;height:31px;line-height:31px">45.76</div>
<div class="dt" style="left:593px;top:375px;width:69px;height:31px;line-height:31px">MTF</div>
<div class="dt" style="left:663px;top:375px;width:65px;height:31px;line-height:31px">1.56</div>
<div class="dt" style="left:729px;top:375px;width:48px;height:31px;line-height:31px">0.03</div>
<div class="dt" style="left:778px;top:375px;width:81px;height:31px;line-height:31px">6548745.89</div>
<div class="dt" style="left:860px;top:375px;width:80px;height:31px;line-height:31px">5516929.24</div>
<div class="dt" style="left:941px;top:375px;width:61px;height:31px;line-height:31px">2279.52</div>
<div class="dt" style="left:1003px;top:375px;width:49px;height:31px;line-height:31px">0</div>
<div class="dt" style="left:1053px;top:375px;width:59px;height:31px;line-height:31px">-3.73</div>
<b class="tri" style="left:247px;top:398px"></b>
<b class="tri" style="left:654px;top:398px"></b>
<b class="tri" style="left:1477px;top:398px"></b>
<div class="dt" style="left:30px;top:407px;width:65px;height:31px;line-height:31px">25<em>/</em>11<em>/</em>25</div>
<div class="dt" style="left:173px;top:407px;width:82px;height:31px;line-height:31px">rotary</div>
<div class="dt" style="left:256px;top:407px;width:49px;height:31px;line-height:31px">15:14</div>
<div class="dt" style="left:306px;top:407px;width:49px;height:31px;line-height:31px">15:16</div>
<div class="dt" style="left:412px;top:407px;width:64px;height:31px;line-height:31px">45.89</div>
<div class="dt" style="left:477px;top:407px;width:49px;height:31px;line-height:31px">50.76</div>
<div class="dt" style="left:593px;top:407px;width:69px;height:31px;line-height:31px">MTF</div>
<div class="dt" style="left:663px;top:407px;width:65px;height:31px;line-height:31px">3.13</div>
<div class="dt" style="left:729px;top:407px;width:48px;height:31px;line-height:31px">0.03</div>
<div class="dt" style="left:778px;top:407px;width:81px;height:31px;line-height:31px">6551110.04</div>
<div class="dt" style="left:941px;top:407px;width:61px;height:31px;line-height:31px">2282.97</div>
<div class="dt" style="left:1003px;top:407px;width:49px;height:31px;line-height:31px">29.94</div>
<div class="dt" style="left:1053px;top:407px;width:59px;height:31px;line-height:31px">8805.75</div>
<div class="dt" style="left:1486px;top:407px;width:66px;height:31px;line-height:31px">4</div>
<div class="dt" style="left:1553px;top:407px;width:76px;height:31px;line-height:31px">40.26</div>
<div class="dt" style="left:1630px;top:407px;width:49px;height:31px;line-height:31px">0.01</div>
<div class="dt" style="left:1680px;top:407px;width:49px;height:31px;line-height:31px">5.8</div>
<div class="dt" style="left:1730px;top:407px;width:62px;height:31px;line-height:31px">0.01</div>
<b class="tri" style="left:247px;top:430px"></b>
<b class="tri" style="left:654px;top:430px"></b>
<b class="tri" style="left:1477px;top:430px"></b>
<div class="dt" style="left:30px;top:439px;width:65px;height:31px;line-height:31px">25<em>/</em>11<em>/</em>25</div>
<div class="dt" style="left:173px;top:439px;width:82px;height:31px;line-height:31px">sliding</div>
<div class="dt" style="left:256px;top:439px;width:49px;height:31px;line-height:31px">15:21</div>
<div class="dt" style="left:306px;top:439px;width:49px;height:31px;line-height:31px">15:23</div>
<div class="dt" style="left:412px;top:439px;width:64px;height:31px;line-height:31px">50.96</div>
<div class="dt" style="left:477px;top:439px;width:49px;height:31px;line-height:31px">55.76</div>
<div class="dt" style="left:593px;top:439px;width:69px;height:31px;line-height:31px">MTF</div>
<div class="dt" style="left:663px;top:439px;width:65px;height:31px;line-height:31px">2.35</div>
<div class="dt" style="left:729px;top:439px;width:48px;height:31px;line-height:31px">0.03</div>
<div class="dt" style="left:778px;top:439px;width:81px;height:31px;line-height:31px">6549443.43</div>
<div class="dt" style="left:860px;top:439px;width:80px;height:31px;line-height:31px">5514429.08</div>
<div class="dt" style="left:941px;top:439px;width:61px;height:31px;line-height:31px">2273.97</div>
<div class="dt" style="left:1003px;top:439px;width:49px;height:31px;line-height:31px">0</div>
<div class="dt" style="left:1053px;top:439px;width:59px;height:31px;line-height:31px">-2.81</div>
<b class="tri" style="left:247px;top:462px"></b>
<b class="tri" style="left:654px;top:462px"></b>
<b class="tri" style="left:1477px;top:462px"></b>
<div class="dt" style="left:30px;top:471px;width:65px;height:31px;line-height:31px">25<em>/</em>11<em>/</em>25</div>
<div class="dt" style="left:173px;top:471px;width:82px;height:31px;line-height:31px">rotary</div>
<div class="dt" style="left:256px;top:471px;width:49px;height:31px;line-height:31px">15:23</div>
<div class="dt" style="left:306px;top:471px;width:49px;height:31px;line-height:31px">15:25</div>
<div class="dt" style="left:412px;top:471px;width:64px;height:31px;line-height:31px">55.92</div>
<div class="dt" style="left:477px;top:471px;width:49px;height:31px;line-height:31px">60.76</div>
<div class="dt" style="left:593px;top:471px;width:69px;height:31px;line-height:31px">MTF</div>
<div class="dt" style="left:663px;top:471px;width:65px;height:31px;line-height:31px">2.32</div>
<div class="dt" style="left:729px;top:471px;width:48px;height:31px;line-height:31px">0.03</div>
<div class="dt" style="left:778px;top:471px;width:81px;height:31px;line-height:31px">6552852.78</div>
<div class="dt" style="left:941px;top:471px;width:61px;height:31px;line-height:31px">2267.19</div>
<div class="dt" style="left:1003px;top:471px;width:49px;height:31px;line-height:31px">30.1</div>
<div class="dt" style="left:1053px;top:471px;width:59px;height:31px;line-height:31px">8815.58</div>
<b class="tri" style="left:247px;top:494px"></b>
<b class="tri" style="left:654px;top:494px"></b>
<b class="tri" style="left:1477px;top:494px"></b>
<div class="dt" style="left:30px;top:503px;width:65px;height:31px;line-height:31px">25<em>/</em>11<em>/</em>25</div>
<div class="dt" style="left:173px;top:503px;width:82px;height:31px;line-height:31px">sliding</div>
<div class="dt" style="left:256px;top:503px;width:49px;height:31px;line-height:31px">15:30</div>
<div class="dt" style="left:306px;top:503px;width:49px;height:31px;line-height:31px">15:32</div>
<div class="dt" style="left:412px;top:503px;width:64px;height:31px;line-height:31px">60.96</div>
<div class="dt" style="left:477px;top:503px;width:49px;height:31px;line-height:31px">65.76</div>
<div class="dt" style="left:593px;top:503px;width:69px;height:31px;line-height:31px">MTF</div>
<div class="dt" style="left:663px;top:503px;width:65px;height:31px;line-height:31px">3.13</div>
<div class="dt" style="left:729px;top:503px;width:48px;height:31px;line-height:31px">0.03</div>
<div class="dt" style="left:778px;top:503px;width:81px;height:31px;line-height:31px">6548845.37</div>
<div class="dt" style="left:860px;top:503px;width:80px;height:31px;line-height:31px">5513155.16</div>
<div class="dt" style="left:941px;top:503px;width:61px;height:31px;line-height:31px">2268.49</div>
<div class="dt" style="left:1003px;top:503px;width:49px;height:31px;line-height:31px">0</div>
<div class="dt" style="left:1053px;top:503px;width:59px;height:31px;line-height:31px">2.8</div>
<b class="tri" style="left:247px;top:526px"></b>
<b class="tri" style="left:654px;top:526px"></b>
<b class="tri" style="left:1477px;top:526px"></b>
<div class="dt" style="left:30px;top:535px;width:65px;height:31px;line-height:31px">25<em>/</em>11<em>/</em>25</div>
<div class="dt" style="left:173px;top:535px;width:82px;height:31px;line-height:31px">rotary</div>
<div class="dt" style="left:256px;top:535px;width:49px;height:31px;line-height:31px">15:32</div>
<div class="dt" style="left:306px;top:535px;width:49px;height:31px;line-height:31px">15:34</div>
<div class="dt" style="left:412px;top:535px;width:64px;height:31px;line-height:31px">65.85</div>
<div class="dt" style="left:477px;top:535px;width:49px;height:31px;line-height:31px">70.68</div>
<div class="dt" style="left:593px;top:535px;width:69px;height:31px;line-height:31px">MTF</div>
<div class="dt" style="left:663px;top:535px;width:65px;height:31px;line-height:31px">3.08</div>
<div class="dt" style="left:729px;top:535px;width:48px;height:31px;line-height:31px">0.03</div>
<div class="dt" style="left:778px;top:535px;width:81px;height:31px;line-height:31px">6550193.77</div>
<div class="dt" style="left:941px;top:535px;width:61px;height:31px;line-height:31px">2264.35</div>
<div class="dt" style="left:1003px;top:535px;width:49px;height:31px;line-height:31px">30.04</div>
<div class="dt" style="left:1053px;top:535px;width:59px;height:31px;line-height:31px">8821.89</div>
<b class="tri" style="left:247px;top:558px"></b>
<b class="tri" style="left:654px;top:558px"></b>
<b class="tri" style="left:1477px;top:558px"></b>
<div class="dt" style="left:30px;top:567px;width:65px;height:31px;line-height:31px">25<em>/</em>11<em>/</em>25</div>
<div class="dt" style="left:173px;top:567px;width:82px;height:31px;line-height:31px">sliding</div>
<div class="dt" style="left:256px;top:567px;width:49px;height:31px;line-height:31px">15:39</div>
<div class="dt" style="left:306px;top:567px;width:49px;height:31px;line-height:31px">15:41</div>
<div class="dt" style="left:412px;top:567px;width:64px;height:31px;line-height:31px">70.9</div>
<div class="dt" style="left:477px;top:567px;width:49px;height:31px;line-height:31px">75.68</div>
<div class="dt" style="left:593px;top:567px;width:69px;height:31px;line-height:31px">MTF</div>
<div class="dt" style="left:663px;top:567px;width:65px;height:31px;line-height:31px">3.9</div>
<div class="dt" style="left:729px;top:567px;width:48px;height:31px;line-height:31px">0.03</div>
<div class="dt" style="left:778px;top:567px;width:81px;height:31px;line-height:31px">6552415.88</div>
<div class="dt" style="left:860px;top:567px;width:80px;height:31px;line-height:31px">5517413.99</div>
<div class="dt" style="left:941px;top:567px;width:61px;height:31px;line-height:31px">2257.82</div>
<div class="dt" style="left:1003px;top:567px;width:49px;height:31px;line-height:31px">0</div>
<div class="dt" style="left:1053px;top:567px;width:59px;height:31px;line-height:31px">1.65</div>
<b class="tri" style="left:247px;top:590px"></b>
<b class="tri" style="left:654px;top:590px"></b>
<b class="tri" style="left:1477px;top:590px"></b>
<div class="dt" style="left:30px;top:599px;width:65px;height:31px;line-height:31px">25<em>/</em>11<em>/</em>25</div>
<div class="dt" style="left:173px;top:599px;width:82px;height:31px;line-height:31px">rotary</div>
<div class="dt" style="left:256px;top:599px;width:49px;height:31px;line-height:31px">15:42</div>
<div class="dt" style="left:306px;top:599px;width:49px;height:31px;line-height:31px">15:43</div>
<div class="dt" style="left:412px;top:599px;width:64px;height:31px;line-height:31px">75.78</div>
<div class="dt" style="left:477px;top:599px;width:49px;height:31px;line-height:31px">80.67</div>
<div class="dt" style="left:593px;top:599px;width:69px;height:31px;line-height:31px">MTF</div>
<div class="dt" style="left:663px;top:599px;width:65px;height:31px;line-height:31px">3.42</div>
<div class="dt" style="left:729px;top:599px;width:48px;height:31px;line-height:31px">0.03</div>
<div class="dt" style="left:778px;top:599px;width:81px;height:31px;line-height:31px">6549958.44</div>
<div class="dt" style="left:941px;top:599px;width:61px;height:31px;line-height:31px">2254.29</div>
<div class="dt" style="left:1003px;top:599px;width:49px;height:31px;line-height:31px">30.09</div>
<div class="dt" style="left:1053px;top:599px;width:59px;height:31px;line-height:31px">8805.88</div>
<b class="tri" style="left:247px;top:622px"></b>
<b class="tri" style="left:654px;top:622px"></b>
<b class="tri" style="left:1477px;top:622px"></b>
<div class="dt" style="left:30px;top:631px;width:65px;height:31px;line-height:31px">25<em>/</em>11<em>/</em>25</div>
<div class="dt" style="left:173px;top:631px;width:82px;height:31px;line-height:31px">sliding</div>
<div class="dt" style="left:256px;top:631px;width:49px;height:31px;line-height:31px">15:48</div>
<div class="dt" style="left:306px;top:631px;width:49px;height:31px;line-height:31px">15:50</div>
<div class="dt" style="left:412px;top:631px;width:64px;height:31px;line-height:31px">80.83</div>
<div class="dt" style="left:477px;top:631px;width:49px;height:31px;line-height:31px">85.67</div>
<div class="dt" style="left:593px;top:631px;width:69px;height:31px;line-height:31px">MTF</div>
<div class="dt" style="left:663px;top:631px;width:65px;height:31px;line-height:31px">4.64</div>
<div class="dt" style="left:729px;top:631px;width:48px;height:31px;line-height:31px">0.03</div>
<div class="dt" style="left:778px;top:631px;width:81px;height:31px;line-height:31px">6550259.6</div>
<div class="dt" style="left:860px;top:631px;width:80px;height:31px;line-height:31px">5513630.77</div>
<div class="dt" style="left:941px;top:631px;width:61px;height:31px;line-height:31px">2259</div>
<div class="dt" style="left:1003px;top:631px;width:49px;height:31px;line-height:31px">0</div>
<div class="dt" style="left:1053px;top:631px;width:59px;height:31px;line-height:31px">5.49</div>
<b class="tri" style="left:247px;top:654px"></b>
<b class="tri" style="left:654px;top:654px"></b>
<b class="tri" style="left:1477px;top:654px"></b>
<div class="dt" style="left:30px;top:663px;width:65px;height:31px;line-height:31px">25<em>/</em>11<em>/</em>25</div>
<div class="dt" style="left:173px;top:663px;width:82px;height:31px;line-height:31px">rotary</div>
<div class="dt" style="left:256px;top:663px;width:49px;height:31px;line-height:31px">15:51</div>
<div class="dt" style="left:306px;top:663px;width:49px;height:31px;line-height:31px">15:53</div>
<div class="dt" style="left:412px;top:663px;width:64px;height:31px;line-height:31px">85.83</div>
<div class="dt" style="left:477px;top:663px;width:49px;height:31px;line-height:31px">90.67</div>
<div class="dt" style="left:593px;top:663px;width:69px;height:31px;line-height:31px">MTF</div>
<div class="dt" style="left:663px;top:663px;width:65px;height:31px;line-height:31px">3.11</div>
<div class="dt" style="left:729px;top:663px;width:48px;height:31px;line-height:31px">0.03</div>
<div class="dt" style="left:778px;top:663px;width:81px;height:31px;line-height:31px">6551026.06</div>
<div class="dt" style="left:941px;top:663px;width:61px;height:31px;line-height:31px">2258.07</div>
<div class="dt" style="left:1003px;top:663px;width:49px;height:31px;line-height:31px">30.11</div>
<div class="dt" style="left:1053px;top:663px;width:59px;height:31px;line-height:31px">8814.19</div>
<b class="tri" style="left:247px;top:686px"></b>
<b class="tri" style="left:654px;top:686px"></b>
<b class="tri" style="left:1477px;top:686px"></b>
<div class="dt" style="left:30px;top:695px;width:65px;height:31px;line-height:31px">25<em>/</em>11<em>/</em>25</div>
<div class="dt" style="left:173px;top:695px;width:82px;height:31px;line-height:31px">sliding</div>
<div class="dt" style="left:256px;top:695px;width:49px;height:31px;line-height:31px">15:58</div>
<div class="dt" style="left:306px;top:695px;width:49px;height:31px;line-height:31px">15:59</div>
<div class="dt" style="left:412px;top:695px;width:64px;height:31px;line-height:31px">90.84</div>
<div class="dt" style="left:477px;top:695px;width:49px;height:31px;line-height:31px">95.67</div>
<div class="dt" style="left:593px;top:695px;width:69px;height:31px;line-height:31px">MTF</div>
<div class="dt" style="left:663px;top:695px;width:65px;height:31px;line-height:31px">5.26</div>
<div class="dt" style="left:729px;top:695px;width:48px;height:31px;line-height:31px">0.03</div>
<div class="dt" style="left:778px;top:695px;width:81px;height:31px;line-height:31px">6550371.47</div>
<div class="dt" style="left:860px;top:695px;width:80px;height:31px;line-height:31px">5511154.11</div>
<div class="dt" style="left:941px;top:695px;width:61px;height:31px;line-height:31px">2229.6</div>
<div class="dt" style="left:1003px;top:695px;width:49px;height:31px;line-height:31px">0</div>
<div class="dt" style="left:1053px;top:695px;width:59px;height:31px;line-height:31px">0.23</div>
<b class="tri" style="left:247px;top:718px"></b>
<b class="tri" style="left:654px;top:718px"></b>
<b class="tri" style="left:1477px;top:718px"></b>
<div class="dt" style="left:30px;top:727px;width:65px;height:31px;line-height:31px">25<em>/</em>11<em>/</em>25</div>
<div class="dt" style="left:173px;top:727px;width:82px;height:31px;line-height:31px">rotary</div>
<div class="dt" style="left:256px;top:727px;width:49px;height:31px;line-height:31px">16:00</div>
<div class="dt" style="left:306px;top:727px;width:49px;height:31px;line-height:31px">16:02</div>
<div class="dt" style="left:412px;top:727px;width:64px;height:31px;line-height:31px">95.78</div>
<div class="dt" style="left:477px;top:727px;width:49px;height:31px;line-height:31px">100.67</div>
<div class="dt" style="left:593px;top:727px;width:69px;height:31px;line-height:31px">MTF</div>
<div class="dt" style="left:663px;top:727px;width:65px;height:31px;line-height:31px">3.12</div>
<div class="dt" style="left:729px;top:727px;width:48px;height:31px;line-height:31px">0.03</div>
<div class="dt" style="left:778px;top:727px;width:81px;height:31px;line-height:31px">6549738.58</div>
<div class="dt" style="left:941px;top:727px;width:61px;height:31px;line-height:31px">2230.97</div>
<div class="dt" style="left:1003px;top:727px;width:49px;height:31px;line-height:31px">29.96</div>
<div class="dt" style="left:1053px;top:727px;width:59px;height:31px;line-height:31px">8803.41</div>
<b class="tri" style="left:247px;top:750px"></b>
<b class="tri" style="left:654px;top:750px"></b>
<b class="tri" style="left:1477px;top:750px"></b>
<div class="dt" style="left:30px;top:759px;width:65px;height:31px;line-height:31px">25<em>/</em>11<em>/</em>25</div>
<div class="dt" style="left:173px;top:759px;width:82px;height:31px;line-height:31px">sliding</div>
<div class="dt" style="left:256px;top:759px;width:49px;height:31px;line-height:31px">16:07</div>
<div class="dt" style="left:306px;top:759px;width:49px;height:31px;line-height:31px">16:09</div>
<div class="dt" style="left:412px;top:759px;width:64px;height:31px;line-height:31px">100.84</div>
<div class="dt" style="left:477px;top:759px;width:49px;height:31px;line-height:31px">105.68</div>
<div class="dt" style="left:593px;top:759px;width:69px;height:31px;line-height:31px">MTF</div>
<div class="dt" style="left:663px;top:759px;width:65px;height:31px;line-height:31px">2.84</div>
<div class="dt" style="left:729px;top:759px;width:48px;height:31px;line-height:31px">0.03</div>
<div class="dt" style="left:778px;top:759px;width:81px;height:31px;line-height:31px">6550912.2</div>
<div class="dt" style="left:860px;top:759px;width:80px;height:31px;line-height:31px">5509879.3</div>
<div class="dt" style="left:941px;top:759px;width:61px;height:31px;line-height:31px">2269.17</div>
<div class="dt" style="left:1003px;top:759px;width:49px;height:31px;line-height:31px">0</div>
<div class="dt" style="left:1053px;top:759px;width:59px;height:31px;line-height:31px">-3.04</div>
<b class="tri" style="left:247px;top:782px"></b>
<b class="tri" style="left:654px;top:782px"></b>
<b class="tri" style="left:1477px;top:782px"></b>
<div class="dt" style="left:30px;top:791px;width:65px;height:31px;line-height:31px">25<em>/</em>11<em>/</em>25</div>
<div class="dt" style="left:173px;top:791px;width:82px;height:31px;line-height:31px">rotary</div>
<div class="dt" style="left:256px;top:791px;width:49px;height:31px;line-height:31px">16:09</div>
<div class="dt" style="left:306px;top:791px;width:49px;height:31px;line-height:31px">16:11</div>
<div class="dt" style="left:412px;top:791px;width:64px;height:31px;line-height:31px">105.79</div>
<div class="dt" style="left:477px;top:791px;width:49px;height:31px;line-height:31px">110.67</div>
<div class="dt" style="left:593px;top:791px;width:69px;height:31px;line-height:31px">MTF</div>
<div class="dt" style="left:663px;top:791px;width:65px;height:31px;line-height:31px">3.19</div>
<div class="dt" style="left:729px;top:791px;width:48px;height:31px;line-height:31px">0.03</div>
<div class="dt" style="left:778px;top:791px;width:81px;height:31px;line-height:31px">6549771.69</div>
<div class="dt" style="left:941px;top:791px;width:61px;height:31px;line-height:31px">2264.68</div>
<div class="dt" style="left:1003px;top:791px;width:49px;height:31px;line-height:31px">29.99</div>
<div class="dt" style="left:1053px;top:791px;width:59px;height:31px;line-height:31px">8809.25</div>
<b class="tri" style="left:247px;top:814px"></b>
<b class="tri" style="left:654px;top:814px"></b>
<b class="tri" style="left:1477px;top:814px"></b>
<div class="dt" style="left:30px;top:823px;width:65px;height:31px;line-height:31px">25<em>/</em>11<em>/</em>25</div>
<div class="dt" style="left:173px;top:823px;width:82px;height:31px;line-height:31px">sliding</div>
<div class="dt" style="left:256px;top:823px;width:49px;height:31px;line-height:31px">16:16</div>
<div class="dt" style="left:306px;top:823px;width:49px;height:31px;line-height:31px">16:18</div>
<div class="dt" style="left:412px;top:823px;width:64px;height:31px;line-height:31px">110.88</div>
<div class="dt" style="left:477px;top:823px;width:49px;height:31px;line-height:31px">115.67</div>
<div class="dt" style="left:593px;top:823px;width:69px;height:31px;line-height:31px">MTF</div>
<div class="dt" style="left:663px;top:823px;width:65px;height:31px;line-height:31px">1.55</div>
<div class="dt" style="left:729px;top:823px;width:48px;height:31px;line-height:31px">0.03</div>
<div class="dt" style="left:778px;top:823px;width:81px;height:31px;line-height:31px">6551163.27</div>
<div class="dt" style="left:860px;top:823px;width:80px;height:31px;line-height:31px">5515758.77</div>
<div class="dt" style="left:941px;top:823px;width:61px;height:31px;line-height:31px">2278.07</div>
<div class="dt" style="left:1003px;top:823px;width:49px;height:31px;line-height:31px">0</div>
<div class="dt" style="left:1053px;top:823px;width:59px;height:31px;line-height:31px">-2.78</div>
<b class="tri" style="left:247px;top:846px"></b>
<b class="tri" style="left:654px;top:846px"></b>
<b class="tri" style="left:1477px;top:846px"></b>
<div class="dt" style="left:30px;top:855px;width:65px;height:31px;line-height:31px">25<em>/</em>11<em>/</em>25</div>
<div class="dt" style="left:173px;top:855px;width:82px;height:31px;line-height:31px">rotary</div>
<div class="dt" style="left:256px;top:855px;width:49px;height:31px;line-height:31px">16:18</div>
<div class="dt" style="left:306px;top:855px;width:49px;height:31px;line-height:31px">16:20</div>
<div class="dt" style="left:412px;top:855px;width:64px;height:31px;line-height:31px">115.82</div>
<div class="dt" style="left:477px;top:855px;width:49px;height:31px;line-height:31px">120.67</div>
<div class="dt" style="left:593px;top:855px;width:69px;height:31px;line-height:31px">MTF</div>
<div class="dt" style="left:663px;top:855px;width:65px;height:31px;line-height:31px">3.43</div>
<div class="dt" style="left:729px;top:855px;width:48px;height:31px;line-height:31px">0.03</div>
<div class="dt" style="left:778px;top:855px;width:81px;height:31px;line-height:31px">6548791.75</div>
<div class="dt" style="left:941px;top:855px;width:61px;height:31px;line-height:31px">2281.47</div>
<div class="dt" style="left:1003px;top:855px;width:49px;height:31px;line-height:31px">29.88</div>
<div class="dt" style="left:1053px;top:855px;width:59px;height:31px;line-height:31px">8806.23</div>
<b class="tri" style="left:247px;top:878px"></b>
<b class="tri" style="left:654px;top:878px"></b>
<b class="tri" style="left:1477px;top:878px"></b>
</div>
<div class="sb" style="top:182px;height:888px;background:#2e2e34;border-radius:3.5px"></div>
<div class="sb" style="top:268px;height:427px;background:#45454e;border-radius:3.5px"></div>
</body></html>
